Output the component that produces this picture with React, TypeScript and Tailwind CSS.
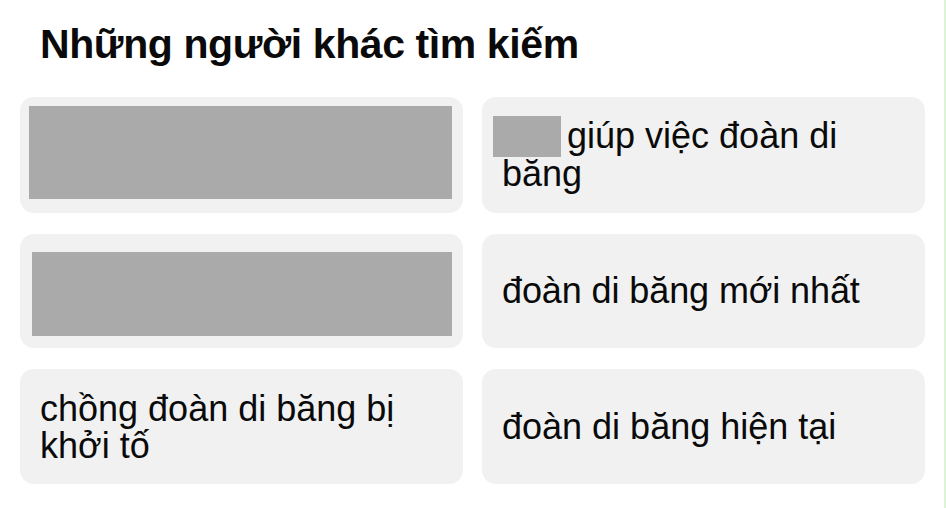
import type { ReactNode } from 'react';

const body = "font-['Liberation_Sans',Arial,sans-serif]";

function Card({ children, className = '' }: { children: ReactNode; className?: string }) {
  return (
    <div className={`bg-[#f1f1f1] rounded-[14px] flex items-center ${className}`}>
      {children}
    </div>
  );
}

export default function App() {
  return (
    <div className={`w-[946px] h-[508px] bg-white border-r-2 border-[#dcf3d6] ${body} text-[#0a0a0a]`}>
      <h1 className="pl-[40px] pt-[24px] text-[41px] leading-[41px] font-bold tracking-[-0.4px]">
        Những người khác tìm kiếm
      </h1>

      <div className="mt-[32px] pl-[20px] grid grid-cols-[443px_443px] grid-rows-[116px_114px_115px] gap-x-[19px] gap-y-[21px]">
        {/* redacted suggestion */}
        <Card className="pl-[9px] pr-[11px] pt-[9px] pb-[14px] items-stretch">
          <div className="flex-1 bg-[#aaaaaa]" />
        </Card>

        <Card className="px-[20px]">
          <p className="text-[36px] leading-[38px]">
            <span className="inline-block w-[68px] h-[41px] -ml-[9px] mr-[6px] -mt-[1px] -mb-[3px] align-top bg-[#aaaaaa]" />
            giúp việc đoàn di băng
          </p>
        </Card>

        <Card className="pl-[12px] pr-[11px] pt-[18px] pb-[12px] items-stretch">
          <div className="flex-1 bg-[#aaaaaa]" />
        </Card>

        <Card className="px-[20px]">
          <p className="text-[36px] leading-[38px] tracking-[-0.1px]">đoàn di băng mới nhất</p>
        </Card>

        <Card className="px-[20px]">
          <p className="text-[36px] leading-[37px]">chồng đoàn di băng bị khởi tố</p>
        </Card>

        <Card className="px-[20px]">
          <p className="text-[36px] leading-[38px]">đoàn di băng hiện tại</p>
        </Card>
      </div>
    </div>
  );
}
